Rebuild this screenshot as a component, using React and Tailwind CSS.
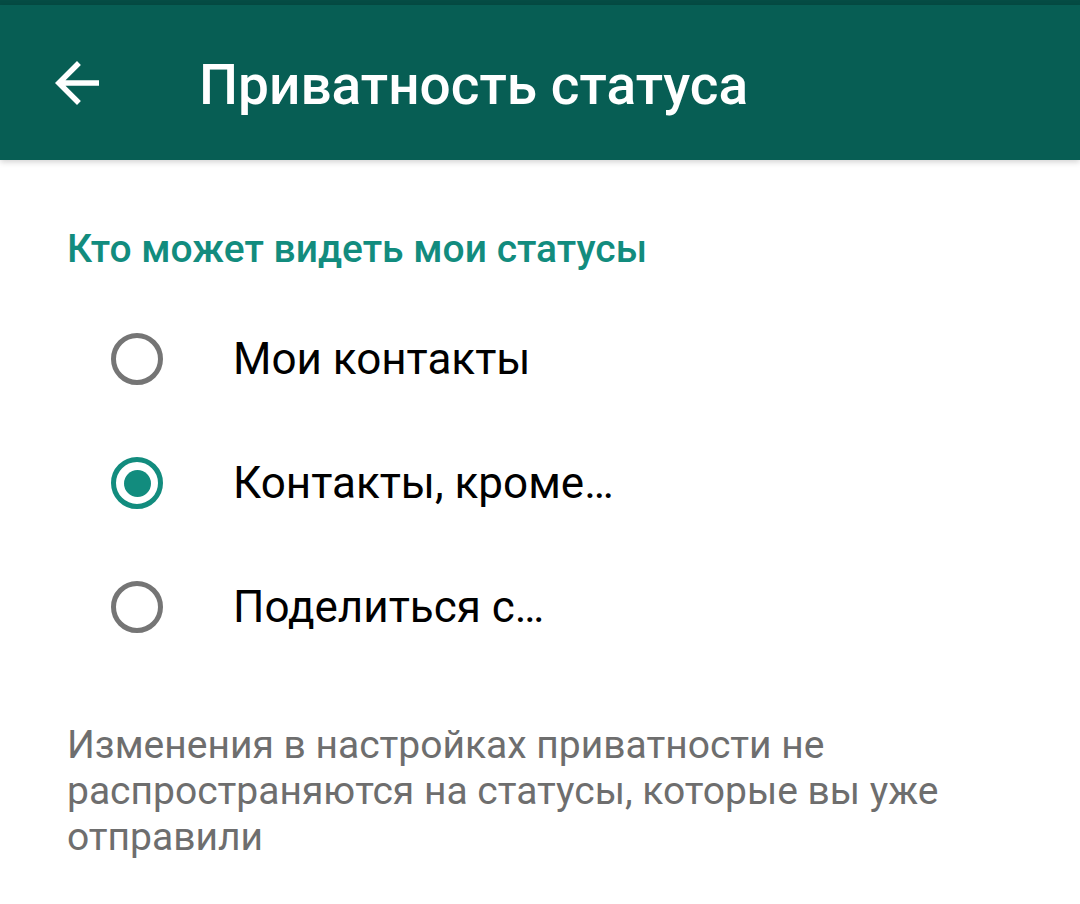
import React, { useState } from 'react';

const options = [
  { id: 'contacts', label: 'Мои контакты' },
  { id: 'except', label: 'Контакты, кроме…' },
  { id: 'share', label: 'Поделиться с…' },
];

function Radio({ checked }) {
  return (
    <span
      className={`w-[52px] h-[52px] rounded-full border-[5px] flex items-center justify-center shrink-0 ${
        checked ? 'border-[#128c7e]' : 'border-[#757575]'
      }`}
    >
      {checked && <span className="w-[27px] h-[27px] rounded-full bg-[#128c7e]" />}
    </span>
  );
}

export default function App() {
  const [selected, setSelected] = useState('except');

  return (
    <div className="w-[1080px] h-[904px] bg-white overflow-hidden" style={{ fontFamily: 'Roboto, "Noto Sans", sans-serif' }}>
      {/* status bar strip */}
      <div className="h-[5px] bg-[#054c44]" />

      {/* toolbar */}
      <div className="h-[155px] bg-[#075e54] flex items-center shadow-[0_2px_6px_rgba(0,0,0,0.18)] relative">
        <svg viewBox="4 4 16 16" className="w-[44px] h-[44px] ml-[55px]" fill="white">
          <path d="M20 11H7.83l5.59-5.59L12 4l-8 8 8 8 1.41-1.41L7.83 13H20v-2z" />
        </svg>
        <h1 className="ml-[100px] text-[55px] font-medium text-white leading-none mt-[6px]">Приватность статуса</h1>
      </div>

      <div className="pl-[67px] pt-[70px]">
        <h2 className="text-[39px] font-medium text-[#128c7e] leading-none">Кто может видеть мои статусы</h2>

        <div className="mt-[64px] flex flex-col gap-[72px]">
          {options.map((o) => (
            <button
              key={o.id}
              onClick={() => setSelected(o.id)}
              className="flex items-center text-left h-[52px] pl-[44px]"
            >
              <Radio checked={selected === o.id} />
              <span className="ml-[70px] text-[44px] text-black leading-none">{o.label}</span>
            </button>
          ))}
        </div>

        <p className="mt-[89px] pr-[100px] text-[39px] leading-[46px] text-[#6e6e6e]">
          Изменения в настройках приватности не распространяются на статусы, которые вы уже отправили
        </p>
      </div>
    </div>
  );
}
